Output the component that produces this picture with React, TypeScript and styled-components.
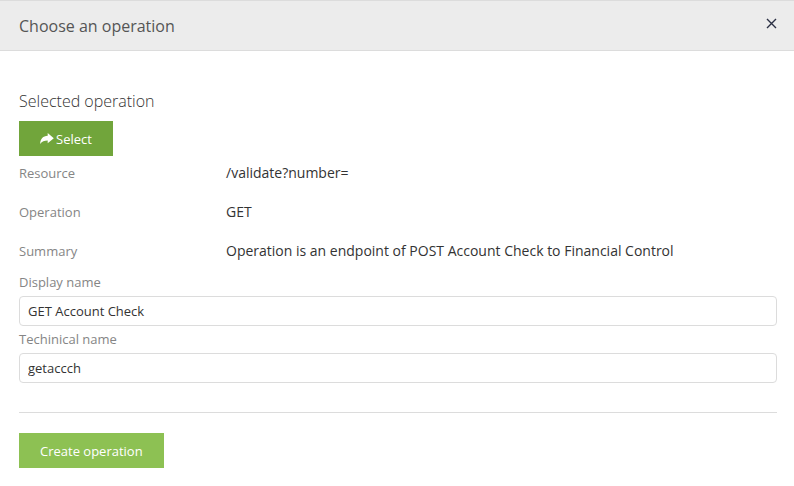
import React, { useState } from "react";
import styled, { createGlobalStyle } from "styled-components";

const GlobalStyle = createGlobalStyle`
  *, *::before, *::after { box-sizing: border-box; }
  body {
    margin: 0;
    background: #fff;
    color: #333;
    font-family: "Open Sans", "Noto Sans", sans-serif;
    font-size: 14px;
    line-height: 20px;
  }
  button, input { font-family: inherit; }
`;

const Header = styled.header`
  display: flex;
  align-items: center;
  justify-content: space-between;
  padding: 13px 17px 11px 19px;
  background: #ececec;
  border-top: 1px solid #dcdcdc;
  border-bottom: 1px solid #dcdcdc;
`;

const Title = styled.h1`
  margin: 0;
  font-size: 16px;
  line-height: 25px;
  font-weight: 400;
  color: #555;
`;

const CloseButton = styled.button`
  display: flex;
  padding: 0;
  margin-bottom: 7px;
  border: 0;
  background: none;
  color: #2b3044;
  cursor: pointer;
`;

const Content = styled.main`
  padding: 38px 17px 18px 19px;
`;

const SectionTitle = styled.h2`
  margin: 0 0 8px;
  font-size: 16px;
  line-height: 24px;
  font-weight: 300;
  color: #333;
`;

const Button = styled.button<{ $tone: "dark" | "light" }>`
  display: flex;
  align-items: center;
  gap: 2px;
  height: 35px;
  padding: 0 21px;
  border: 0;
  background: ${({ $tone }) => ($tone === "dark" ? "#71a53b" : "#8dc153")};
  color: #fff;
  font-size: 13px;
  font-weight: 500;
  white-space: nowrap;
  cursor: pointer;
`;

const Details = styled.dl`
  margin: 0;
`;

const DetailRow = styled.div`
  display: grid;
  grid-template-columns: 207px minmax(0, 1fr);
  padding: 7px 0 12px;
`;

const Term = styled.dt`
  font-size: 13px;
  color: #858585;
`;

const Value = styled.dd`
  margin: 0;
`;

const Field = styled.div`
  margin-bottom: 4px;
`;

const Label = styled.label`
  display: block;
  margin-bottom: 4px;
  font-size: 13px;
  line-height: 19px;
  color: #858585;
`;

const TextInput = styled.input`
  display: block;
  width: 100%;
  height: 30px;
  padding: 0 8px;
  border: 1px solid #dcdcdc;
  border-radius: 4px;
  background: #fff;
  color: #333;
  font-size: 13px;
`;

const Footer = styled.footer`
  margin-top: 29px;
  padding-top: 20px;
  border-top: 1px solid #dcdcdc;
`;

const ShareArrow = () => (
  <svg width="14" height="12" viewBox="0 0 14 12" fill="currentColor" aria-hidden="true">
    <path d="M7.7 0 L13.8 5.2 L7.7 10.2 V7.4 C4.3 7.4 2 8.2 0.2 10.9 C0.3 6 3 3 7.7 2.8 Z" />
  </svg>
);

const Cross = () => (
  <svg width="11" height="11" viewBox="0 0 11 11" fill="none" stroke="currentColor" strokeWidth="1.4" aria-hidden="true">
    <path d="M1 1 L10 10 M10 1 L1 10" />
  </svg>
);

const details = [
  { term: "Resource", value: "/validate?number=" },
  { term: "Operation", value: "GET" },
  { term: "Summary", value: "Operation is an endpoint of POST Account Check to Financial Control" },
];

export default function App() {
  const [displayName, setDisplayName] = useState("GET Account Check");
  const [technicalName, setTechnicalName] = useState("getaccch");

  return (
    <>
      <GlobalStyle />
      <Header>
        <Title>Choose an operation</Title>
        <CloseButton type="button" aria-label="Close">
          <Cross />
        </CloseButton>
      </Header>
      <Content>
        <SectionTitle>Selected operation</SectionTitle>
        <Button type="button" $tone="dark">
          <ShareArrow />
          Select
        </Button>
        <Details>
          {details.map(({ term, value }) => (
            <DetailRow key={term}>
              <Term>{term}</Term>
              <Value>{value}</Value>
            </DetailRow>
          ))}
        </Details>
        <Field>
          <Label htmlFor="display-name">Display name</Label>
          <TextInput id="display-name" value={displayName} onChange={(e) => setDisplayName(e.target.value)} />
        </Field>
        <Field>
          <Label htmlFor="technical-name">Techinical name</Label>
          <TextInput id="technical-name" value={technicalName} onChange={(e) => setTechnicalName(e.target.value)} />
        </Field>
        <Footer>
          <Button type="button" $tone="light">Create operation</Button>
        </Footer>
      </Content>
    </>
  );
}
